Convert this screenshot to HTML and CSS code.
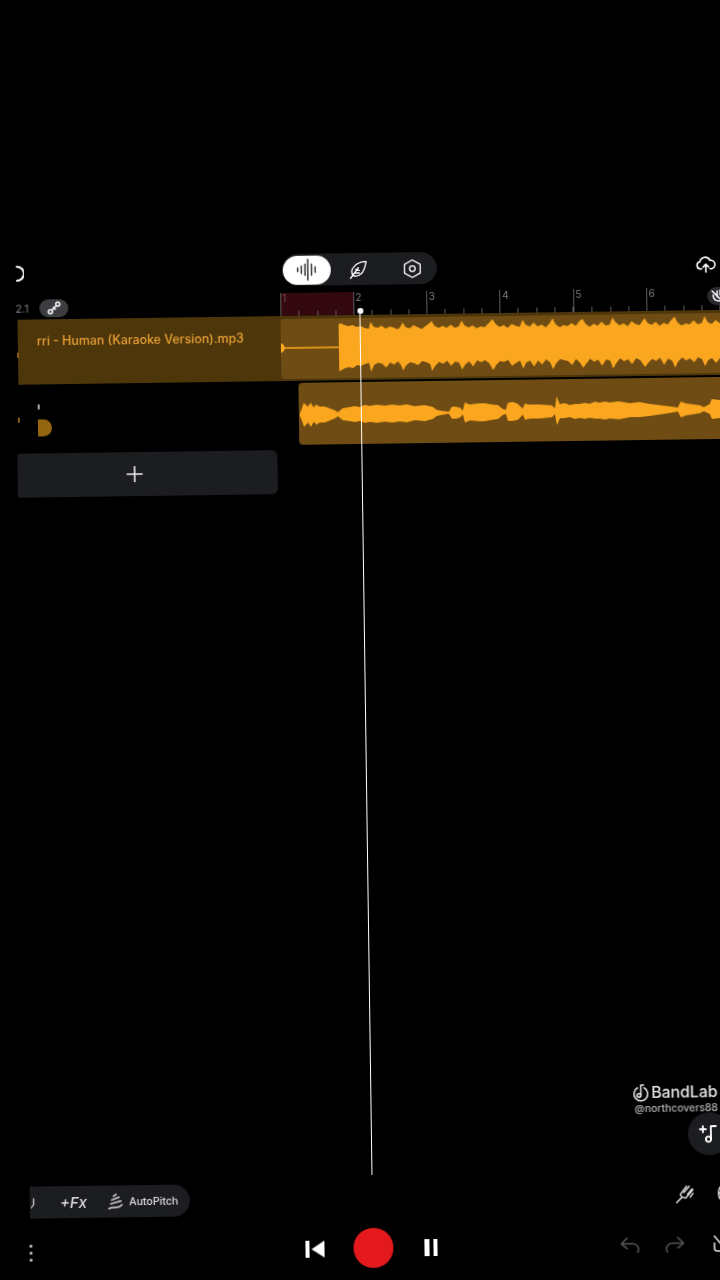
FILE: index.html
```html
<!DOCTYPE html>
<html lang="en">
<head>
    <meta charset="UTF-8">
    <meta name="viewport" content="width=device-width, initial-scale=1.0">
    <title>BandLab Studio</title>
    <link rel="stylesheet" href="styles.css">
</head>
<body>
    <div class="screen">
        <div class="top-bar">
            <svg class="back-arc" viewBox="0 0 8 16"><path d="M1 1a7 7 0 0 1 0 14"/></svg>
            <div class="mode-pill">
                <div class="mode-btn active">
                    <svg viewBox="0 0 26 26"><path d="M3 11v4M7 9v8M11 7v12M14 2v22M18 7v12M22 10v6"/></svg>
                </div>
                <div class="mode-btn">
                    <svg viewBox="0 0 24 24"><path d="M3 22l9-12M6 19c-2-3-2-7 1-10 3-4 9-6 14-6-1 5-2 11-6 14-3 3-6 3-9 2zM9 12l4 1M8 16l5 0"/></svg>
                </div>
                <div class="mode-btn">
                    <svg viewBox="0 0 24 24"><path d="M12 2l9 5v10l-9 5-9-5V7z"/><circle cx="12" cy="12" r="3.2"/></svg>
                </div>
            </div>
            <svg class="cloud" viewBox="0 0 24 20"><path d="M7 15H5.500a4.300 4.300 0 0 1-.6-8.500A6.500 6.500 0 0 1 17.200 5a5 5 0 0 1 1.300 10H17M12 19v-9M8.500 13L12 9.500l3.500 3.500"/></svg>
        </div>

        <div class="ruler-row">
            <div class="ruler-side">
                <span class="time">2.1</span>
                <span class="tuner-chip">
                    <svg viewBox="0 0 16 16"><circle cx="11.500" cy="4" r="2"/><circle cx="4" cy="11.500" r="2"/><path d="M5.500 10l4.500-4.500M7 7l2 2"/></svg>
                </span>
            </div>
            <div class="ruler">
                <div class="bar loop">1</div>
                <div class="bar">2</div>
                <div class="bar">3</div>
                <div class="bar">4</div>
                <div class="bar">5</div>
                <div class="bar">6</div>
                <div class="bar"></div>
                <span class="mute-chip">
                    <svg viewBox="0 0 16 16"><path d="M2 3l10 10M3 7c0 4 2 6 6 6 3 0 4-2 4-4M7 3v6M10 2v5"/></svg>
                </span>
            </div>
        </div>

        <div class="track track-main">
            <div class="track-head">
                <span class="edge-mark"></span>
                <span class="track-name">rri - Human (Karaoke Version).mp3</span>
            </div>
            <div class="clip">
                <svg class="wave" width="460" height="58" viewBox="0 0 460 58">
                    <path d="M0 24q4 2 4 5t-4 5zM4 28.300h54v1.400H4z"/>
                    <polygon points="58,6 60,5 64,7 68,8 72,7 76,9 80,8 84,10 88,11 90,4 93,9 97,10 101,8 105,11 109,9 113,10 117,12 120,9 122,5 125,10 129,11 133,8 137,10 141,12 145,9 149,6 151,4 154,9 158,11 162,9 166,11 170,8 174,11 178,10 181,4 184,9 188,11 192,9 196,12 200,10 204,11 208,7 212,3 215,8 219,11 223,9 227,12 231,8 235,10 239,11 242,4 245,9 249,11 253,7 257,11 261,9 265,12 269,8 272,3 275,9 279,12 283,10 287,11 291,8 295,11 299,6 302,4 305,9 309,12 313,9 317,11 321,7 325,11 329,10 332,3 335,8 339,11 343,9 347,12 351,7 355,10 359,11 364,4 367,9 371,11 375,8 379,12 383,9 387,11 391,6 394,3 397,9 401,12 405,10 409,11 413,7 417,11 421,10 424,3 427,9 431,11 435,7 439,10 443,11 447,4 450,9 454,10 460,6 460,45 454,46 450,50 447,53 443,47 439,45 435,50 431,45 427,47 424,53 421,46 417,44 413,49 409,45 405,47 401,44 397,48 394,54 391,47 387,45 383,51 379,44 375,47 371,45 367,49 364,53 359,46 355,44 351,50 347,45 343,47 339,44 335,49 332,54 329,46 325,45 321,51 317,45 313,47 309,44 305,49 302,53 299,48 295,44 291,50 287,46 283,45 279,44 275,48 272,54 269,47 265,44 261,49 257,45 253,51 249,45 245,47 242,53 239,45 235,47 231,50 227,44 223,46 219,45 215,49 212,54 208,47 204,44 200,46 196,44 192,50 188,45 184,48 181,53 178,46 174,45 170,49 166,44 162,47 158,45 154,49 151,54 149,47 145,45 141,44 137,48 133,46 129,45 125,48 122,53 120,48 117,44 113,47 109,45 105,50 101,46 97,45 93,47 90,54 88,45 84,46 80,48 76,47 72,50 68,49 64,50 60,52 58,53"/>
                </svg>
            </div>
        </div>

        <div class="track track-second">
            <div class="track-head">
                <span class="edge-mark"></span>
                <span class="level-tick"></span>
                <span class="half-avatar"></span>
            </div>
            <div class="clip">
                <svg class="wave" width="440" height="62" viewBox="0 0 440 62">
                    <polygon points="1,31 3,26 5,20 9,24 12,20 15,25 17,22 21,24 26,24 31,26 36,28 39,30 44,26 51,25 56,24 61,25 66,23 71,24 78,23 86,24 93,23 101,24 108,23 116,25 126,24 134,26 138,29 143,30 150,31 153,26 157,26 161,27 164,30 166,22 171,24 181,23 186,23 191,24 199,25 204,29 207,30 209,23 214,22 219,24 222,27 224,29 226,24 231,25 241,25 253,26 256,29 258,17 261,25 266,24 271,26 276,25 281,25 286,24 291,25 296,23 301,24 306,23 311,24 320,23 331,25 341,24 351,26 366,28 373,29 379,30 382,24 387,26 401,28 405,30 411,27 413,22 421,23 431,23 431,41 421,41 413,42 411,37 405,34 401,36 387,38 382,40 379,34 373,35 366,36 351,38 341,39 331,39 320,41 311,40 306,41 301,40 296,40 291,39 286,40 281,39 276,40 271,38 266,39 261,39 258,46 256,35 253,38 241,39 231,39 226,40 224,35 222,37 219,40 214,41 209,41 207,34 204,35 199,39 191,40 186,41 181,41 171,40 166,42 164,34 161,37 157,38 153,38 150,33 143,34 138,35 134,38 126,40 116,39 108,41 101,40 93,41 86,40 78,41 71,40 66,41 61,39 56,40 51,39 44,38 39,34 36,36 31,38 26,40 21,40 17,42 15,39 12,44 9,40 5,44 3,38 1,33"/>
                </svg>
            </div>
        </div>

        <div class="add-track">
            <svg viewBox="0 0 16 16"><path d="M8 0v16M0 8h16"/></svg>
        </div>

        <div class="playhead"></div>

        <div class="dock">
            <div class="brand">
                <div class="brand-logo">
                    <svg viewBox="0 0 18 20"><path d="M5.500 5a7.300 7.300 0 1 0 7 0M9 2h3M9 2v11"/><circle cx="7" cy="13" r="2"/></svg>
                    <span>BandLab</span>
                </div>
                <div class="brand-handle">@northcovers88</div>
            </div>
            <div class="note-chip">
                <svg viewBox="0 0 20 20"><path d="M1 5h6M4 2v6M17 2h-5v13"/><circle cx="9.500" cy="15" r="2.600"/></svg>
            </div>

            <div class="tool-row">
                <div class="fx-pill">
                    <svg class="clipped-icon" viewBox="0 0 8 14"><path d="M5 1v8l-3 4"/></svg>
                    <span class="fx">+Fx</span>
                    <svg class="pitch-icon" viewBox="0 0 18 18"><path d="M10 1L7 3M13 4L5 7M15 8L4 11M16 12c-4 5-9 1-14 4"/></svg>
                    <span class="pitch-label">AutoPitch</span>
                </div>
                <div class="tool-icons">
                    <svg class="fork" viewBox="0 0 22 22"><path d="M2 21l6-6M8 15l-2-3 7-9M8 15l4 1 8-9M10 10l6-7M14 12l5-6M17 15l3-4"/></svg>
                    <svg class="cut-icon" viewBox="0 0 16 20"><rect x="2" y="2" width="14" height="16" rx="6"/><path d="M2 10h10"/></svg>
                </div>
            </div>

            <div class="transport">
                <div class="menu-dots"><i></i><i></i><i></i></div>
                <div class="controls">
                    <svg class="skip" viewBox="0 0 19 17"><path d="M0 0h4v17H0zM19 0v17L6 8.500z"/></svg>
                    <div class="record"></div>
                    <div class="pause"><i></i><i></i></div>
                </div>
                <div class="history">
                    <svg viewBox="0 0 22 20"><path d="M8 3L2 9l6 5M2 9h12a6 6 0 0 1 6 6c0 1 0 2-1 3"/></svg>
                    <svg viewBox="0 0 22 20"><path d="M14 3l6 6-6 5M20 9H8a6 6 0 0 0-6 6c0 1 0 2 1 3"/></svg>
                    <svg class="cut-icon" viewBox="0 0 16 20"><path d="M2 3l10 12M2 10v5c0 2 1 3 3 3h8"/></svg>
                </div>
            </div>
        </div>
    </div>
</body>
</html>
```

FILE: styles.css
```css
html, body {
    margin: 0;
    padding: 0;
    width: 720px;
    height: 1280px;
    overflow: hidden;
    background-color: #000;
}
body {
    font-family: Inter, "Liberation Sans", sans-serif;
    color: #fff;
}
svg {
    display: block;
    fill: none;
    stroke: currentColor;
    stroke-linecap: round;
    stroke-linejoin: round;
}

/* the whole capture sits a little crooked */
.screen {
    position: relative;
    box-sizing: border-box;
    width: 720px;
    height: 1280px;
    padding-top: 253px;
    padding-bottom: 12px;
    display: flex;
    flex-direction: column;
    transform: rotate(-0.8deg);
    filter: blur(0.6px);
}

/* top bar */
.top-bar {
    display: flex;
    align-items: center;
    height: 32px;
}
.back-arc {
    width: 8px;
    height: 16px;
    margin-left: 21px;
    stroke-width: 2;
}
.mode-pill {
    display: flex;
    align-items: center;
    width: 155px;
    height: 32px;
    margin-left: 258px;
    border-radius: 16px;
    background-color: #1c1d20;
}
.mode-btn {
    flex: 0 0 48px;
    height: 29px;
    margin-left: 1px;
    display: flex;
    align-items: center;
    justify-content: center;
    border-radius: 15px;
}
.mode-btn svg {
    width: 21px;
    height: 21px;
    stroke-width: 1.5;
}
.mode-btn + .mode-btn {
    flex-basis: 54px;
    margin-left: 0;
}
.mode-btn.active {
    background-color: #fff;
    color: #333;
}
.mode-btn.active svg {
    width: 24px;
    height: 24px;
    stroke-width: 1.6;
}
.cloud {
    width: 20px;
    height: 17px;
    margin-left: auto;
    margin-right: -1px;
    stroke-width: 1.9;
}

/* ruler */
.ruler-row {
    display: flex;
    height: 23px;
    margin-top: 7px;
    width: 750px;
}
.ruler-side {
    flex: 0 0 284.5px;
    box-sizing: border-box;
    display: flex;
    align-items: center;
    padding-left: 20px;
}
.time {
    font-size: 11px;
    color: #7c7c7c;
}
.tuner-chip {
    width: 29px;
    height: 18px;
    margin-left: 11px;
    display: flex;
    align-items: center;
    justify-content: center;
    border-radius: 9px;
    background-color: #3c3d40;
}
.tuner-chip svg {
    width: 16px;
    height: 16px;
    stroke-width: 1.5;
}
.ruler {
    position: relative;
    flex: 1;
    display: flex;
}
.bar {
    flex: 0 0 73.3px;
    box-sizing: border-box;
    padding-left: 1.5px;
    border-left: 1px solid #5c5c5c;
    font-size: 10px;
    line-height: 10px;
    color: #7f7f7f;
    background: repeating-linear-gradient(90deg, transparent 0 17.3px, #5c5c5c 17.3px 18.3px) bottom left / 100% 5px no-repeat;
}
.bar.loop {
    background-color: #33080f;
    color: #7b4a55;
}
.mute-chip {
    position: absolute;
    left: 427px;
    top: 0;
    width: 30px;
    height: 18px;
    padding-left: 3px;
    border-radius: 9px;
    background-color: #2a2b2e;
}
.mute-chip svg {
    width: 16px;
    height: 16px;
    margin-top: 1px;
    stroke-width: 1.5;
}

/* tracks */
.track {
    display: flex;
    width: 730px;
    margin-left: 22px;
}
.track-main {
    height: 65px;
    background-color: #4e360b;
}
.track-second {
    height: 62px;
    margin-top: 2px;
}
.track-head {
    position: relative;
    flex: 0 0 263px;
    box-sizing: border-box;
    padding-left: 19px;
}
.track-second .track-head {
    flex-basis: 280px;
}
.edge-mark {
    position: absolute;
    left: -1px;
    top: 33px;
    width: 1.5px;
    height: 5px;
    background-color: #8a5f16;
}
.track-second .edge-mark {
    top: 31px;
}
.track-name {
    display: block;
    margin-top: 14px;
    font-size: 12.4px;
    font-weight: 500;
    line-height: 16px;
    color: #e8a035;
    white-space: nowrap;
}
.level-tick {
    display: block;
    width: 1.5px;
    height: 5px;
    margin-top: 18px;
    background-color: #aaa;
}
.half-avatar {
    display: block;
    width: 14px;
    height: 17px;
    margin-top: 10px;
    border-radius: 0 9px 9px 0;
    background-color: #94660f;
}
.clip {
    flex: 1;
    overflow: hidden;
    background-color: #6e4c13;
    border-radius: 4px 0 0 4px;
}
.track-main .clip {
    margin: 3px 0 2px;
}
.wave {
    fill: #faa61f;
    stroke: none;
}
.add-track {
    box-sizing: border-box;
    display: flex;
    align-items: center;
    justify-content: center;
    width: 260px;
    height: 44px;
    margin: 5px 0 0 20px;
    padding-right: 26px;
    border-radius: 2px 6px 6px 2px;
    background-color: #1c1d20;
}
.add-track svg {
    width: 16px;
    height: 16px;
    stroke-width: 1.6;
    color: #eee;
}

/* playhead lies over the tracks */
.playhead {
    position: absolute;
    left: 364px;
    top: 311px;
    width: 1.4px;
    height: 864px;
    background-color: #fff;
}
.playhead::before {
    content: "";
    position: absolute;
    left: -2.5px;
    top: -3px;
    width: 6px;
    height: 6px;
    border-radius: 50%;
    background-color: #fff;
}

/* bottom */
.dock {
    margin-top: auto;
    display: flex;
    flex-direction: column;
}
.brand {
    align-self: flex-end;
    width: 94px;
}
.brand-logo {
    display: flex;
    align-items: center;
    gap: 2px;
    height: 20px;
    font-size: 15.8px;
    font-weight: 500;
    color: #e8e8e8;
}
.brand-logo svg {
    width: 17px;
    height: 19px;
    stroke-width: 1.6;
}
.brand-handle {
    padding-left: 2px;
    font-size: 10.4px;
    font-weight: 500;
    line-height: 13px;
    color: #b5b5b5;
    white-space: nowrap;
}
.note-chip {
    align-self: flex-end;
    box-sizing: border-box;
    width: 43px;
    height: 43px;
    margin-right: -4px;
    margin-top: -2px;
    padding: 12px 0 0 11px;
    border-radius: 50%;
    background-color: #1c1d20;
}
.note-chip svg {
    width: 20px;
    height: 20px;
    stroke-width: 1.8;
}
.tool-row {
    display: flex;
    align-items: center;
    justify-content: space-between;
    height: 32px;
    margin-top: 22px;
    padding-left: 22px;
}
.fx-pill {
    display: flex;
    align-items: center;
    width: 160px;
    height: 32px;
    border-radius: 0 16px 16px 0;
    background-color: #1c1d20;
    color: #ddd;
}
.clipped-icon {
    width: 6px;
    height: 13px;
    stroke-width: 1.6;
}
.fx {
    margin-left: 24px;
    font-size: 15px;
    font-style: italic;
    font-weight: 500;
}
.pitch-icon {
    width: 17px;
    height: 17px;
    margin-left: 20px;
    stroke-width: 1.5;
}
.pitch-label {
    margin-left: 5px;
    font-size: 10.6px;
    font-weight: 500;
}
.tool-icons {
    display: flex;
    align-items: center;
    gap: 22px;
    margin-right: -5px;
    color: #ddd;
}
.fork {
    width: 20px;
    height: 20px;
    stroke-width: 1.6;
}
.cut-icon {
    width: 16px;
    height: 20px;
    stroke-width: 1.6;
}
.transport {
    display: flex;
    align-items: center;
    height: 40px;
    margin-top: 14px;
    padding-left: 21px;
}
.menu-dots {
    display: flex;
    flex-direction: column;
    gap: 4px;
    width: 3px;
}
.menu-dots i {
    height: 3px;
    border-radius: 50%;
    background-color: #ccc;
}
.controls {
    display: flex;
    align-items: center;
    margin-left: 273px;
}
.skip {
    width: 19px;
    height: 17px;
    fill: #fff;
    stroke: none;
}
.record {
    width: 40px;
    height: 40px;
    margin-left: 29px;
    border-radius: 50%;
    background-color: #e3191d;
}
.pause {
    display: flex;
    gap: 4px;
    height: 17px;
    margin-left: 31px;
}
.pause i {
    width: 4.5px;
    background-color: #fff;
}
.history {
    display: flex;
    align-items: center;
    gap: 24px;
    margin-left: auto;
    color: #565656;
}
.history svg {
    width: 21px;
    height: 19px;
    stroke-width: 1.6;
}
.history .cut-icon {
    width: 16px;
    height: 20px;
    margin-left: 3px;
    color: #ddd;
}
```
